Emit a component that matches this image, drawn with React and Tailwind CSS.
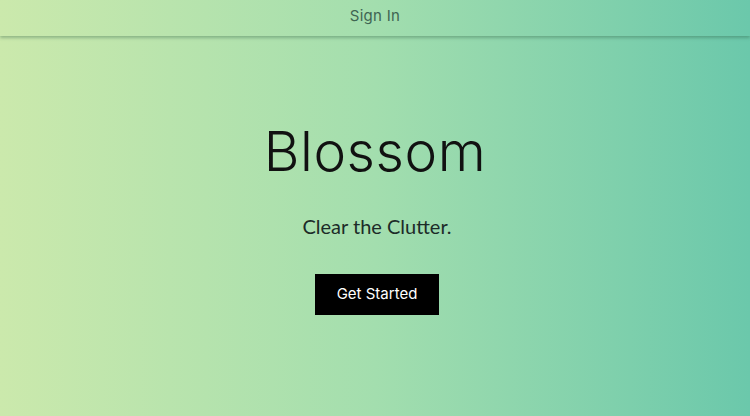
export default function App() {
  return (
    <div className="h-[416px] w-full overflow-hidden bg-[linear-gradient(to_right,#cbe9ac,#a3deae_50%,#6bc8ab)] flex flex-col">
      <header className="h-[36px] shrink-0 flex items-center justify-center pb-[4px] shadow-[0_2px_3px_rgba(40,90,60,0.35)]">
        <a className="text-[15px] text-[#3f6552] font-['Inter',sans-serif] tracking-[0.3px] cursor-pointer">Sign In</a>
      </header>
      <main className="flex flex-col items-center pt-[88px]">
        <h1 className="font-['Inter',sans-serif] font-light text-[55px] leading-none text-[#111] tracking-[0.6px]">Blossom</h1>
        <p className="mt-[32px] ml-[4px] font-['Lato',sans-serif] text-[20px] text-[#1c2b28]">Clear the Clutter.</p>
        <button className="mt-[33px] w-[124px] h-[41px] ml-[4px] bg-black text-white text-[15px] font-['Inter',sans-serif]">Get Started</button>
      </main>
    </div>
  );
}
